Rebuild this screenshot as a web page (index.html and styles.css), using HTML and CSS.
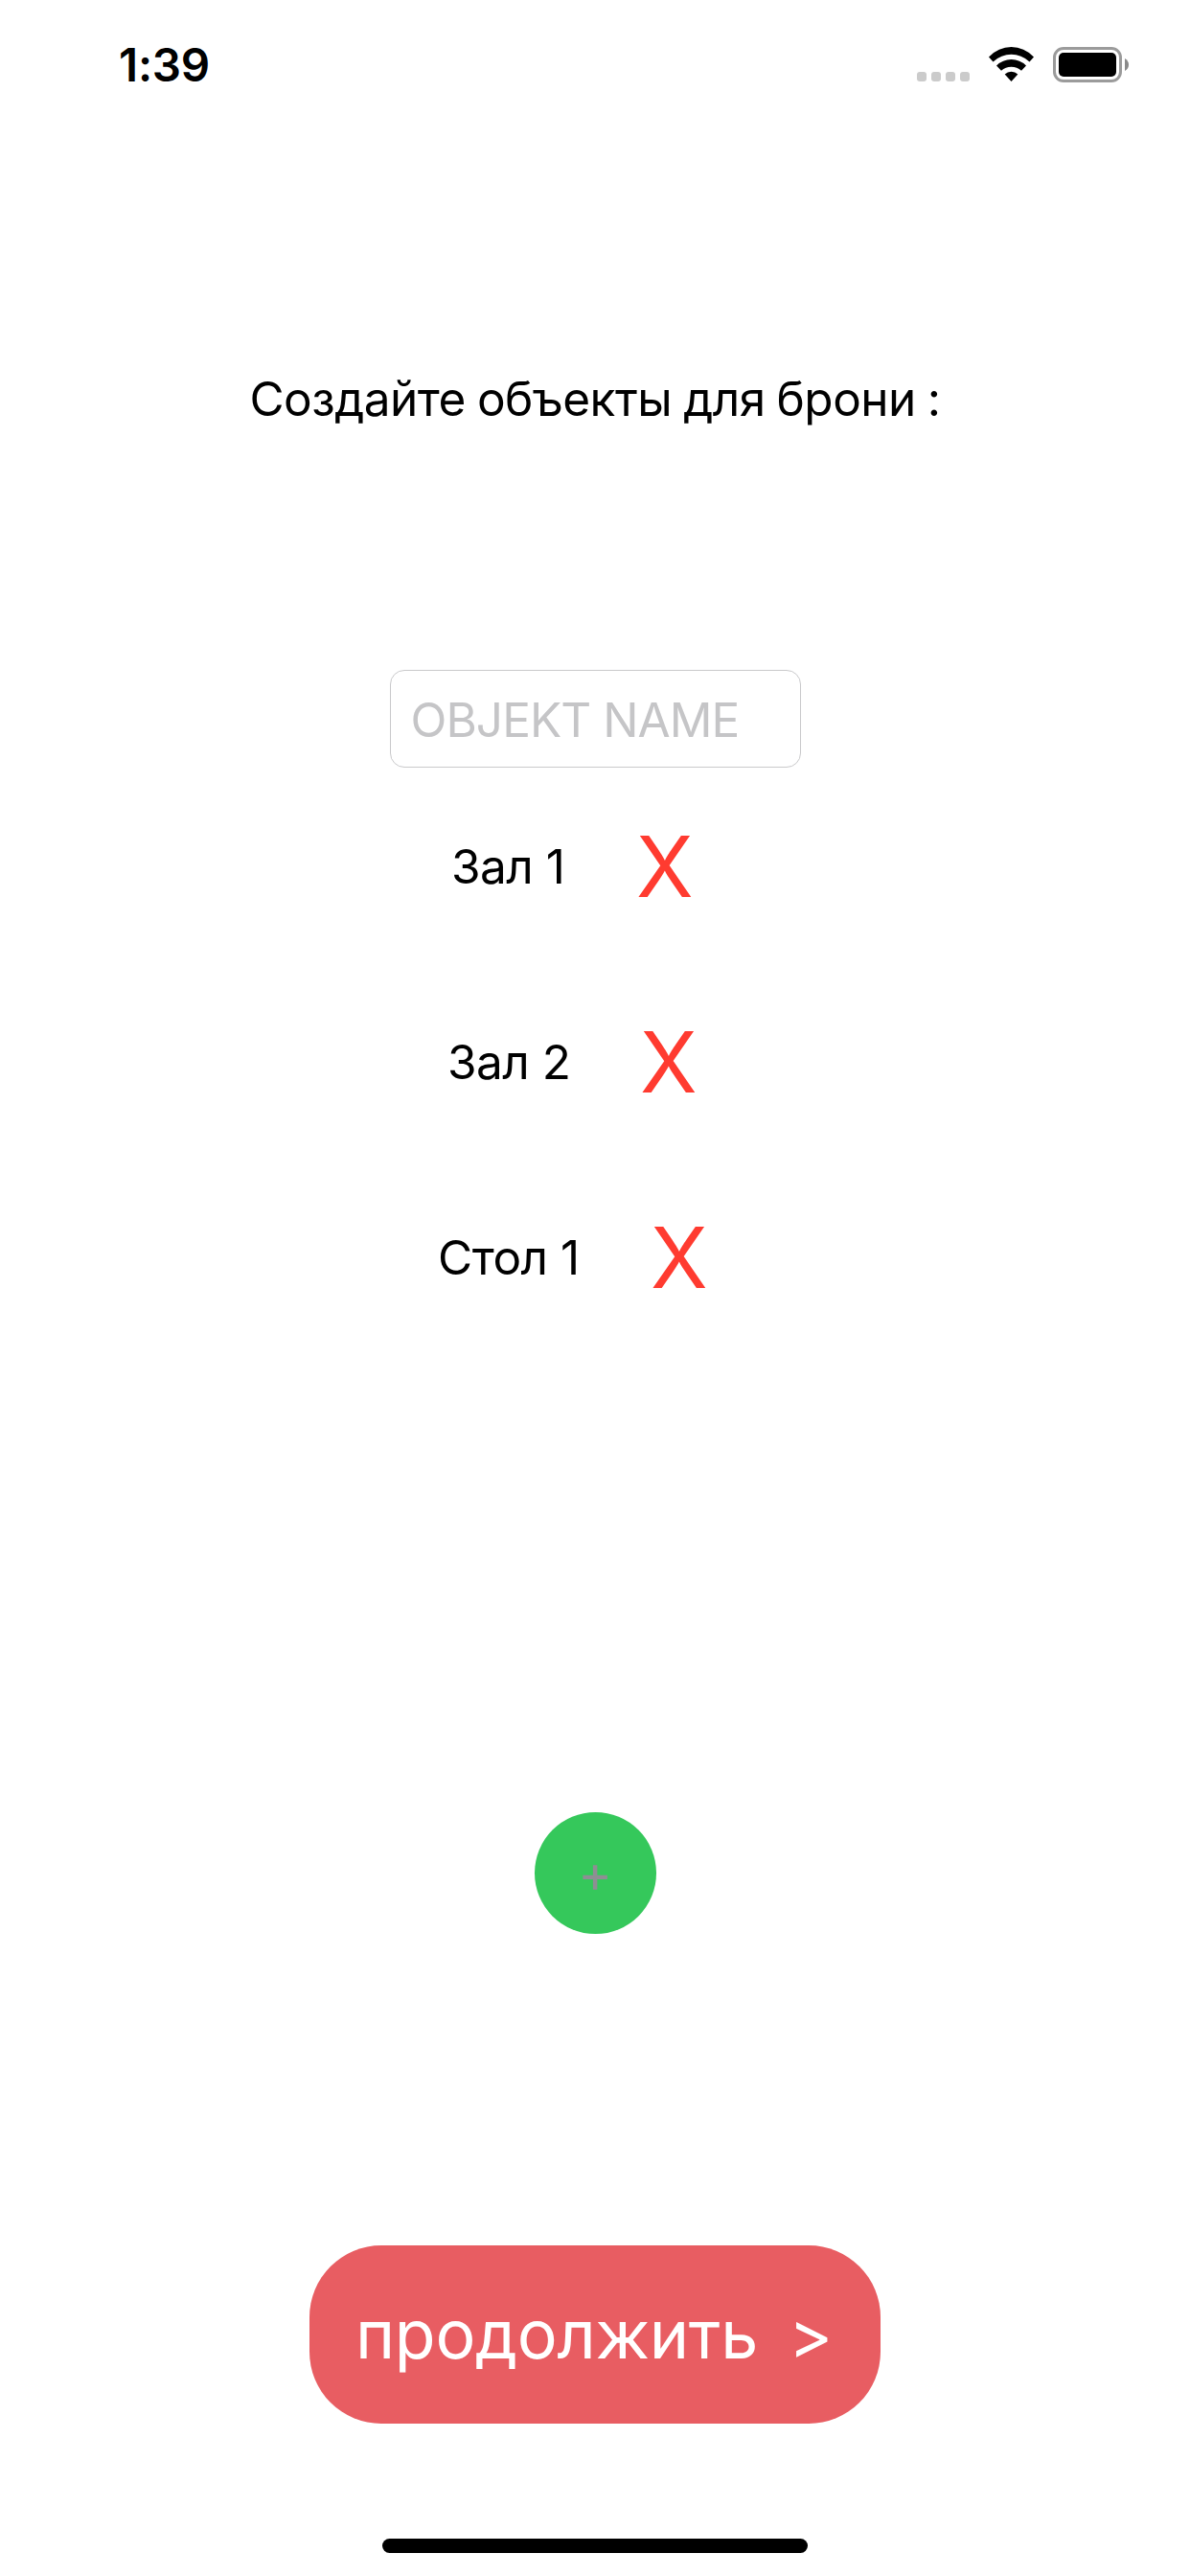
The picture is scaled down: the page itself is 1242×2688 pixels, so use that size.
FILE: index.html
```html
<!DOCTYPE html>
<html lang="ru">
<head>
<meta charset="utf-8">
<title>Объекты</title>
<link rel="stylesheet" href="styles.css">
</head>
<body>
<main class="screen">
  <header class="status">
    <span class="time">1:39</span>
    <svg class="indicators" width="224" height="40" viewBox="956 48 224 40">
      <g fill="#cbcbcb">
        <rect x="957" y="75" width="10" height="10" rx="3"/>
        <rect x="972" y="75" width="10" height="10" rx="3"/>
        <rect x="987" y="75" width="10" height="10" rx="3"/>
        <rect x="1002" y="75" width="10" height="10" rx="3"/>
      </g>
      <path d="M1032 59.5Q1042 49 1055.500 49T1079 59.500L1074.500 64.500Q1066 56.800 1055.500 56.800T1036.500 64.500Z"/>
      <path d="M1040 68.500Q1046.500 62 1055.500 62T1071 68.500L1066 73.700Q1061.500 69.800 1055.500 69.800T1045 73.700Z"/>
      <path d="M1048.700 77.500Q1051.500 74.700 1055.500 74.700T1062.300 77.500L1055.500 85Z"/>
      <rect x="1100.500" y="50.500" width="69" height="34" rx="9.500" fill="none" stroke="#9b9b9b" stroke-width="3"/>
      <rect x="1105" y="55" width="60" height="25" rx="5"/>
      <path d="M1174 61Q1178 63.500 1178 67.500T1174 74Z" fill="#8a8a8a"/>
    </svg>
  </header>
  <h1 class="title">Создайте объекты для брони :</h1>
  <div class="field">OBJEKT NAME</div>
  <ul class="list">
    <li class="row"><span class="name hall-one">Зал 1</span><span class="remove">X</span></li>
    <li class="row"><span class="name hall-two">Зал 2</span><span class="remove">X</span></li>
    <li class="row"><span class="name table-one">Стол 1</span><span class="remove">X</span></li>
  </ul>
  <div class="add"><span class="plus">+</span></div>
  <div class="next"><span class="next-label">продолжить</span><span class="chevron">&gt;</span></div>
  <div class="home"></div>
</main>
</body>
</html>
```
FILE: styles.css
```css
* { box-sizing: border-box; }
body { margin: 0; background: #fff; font-family: Inter, "Liberation Sans", sans-serif; color: #000; }
.screen { width: 1242px; height: 2688px; display: flex; flex-direction: column; align-items: center; overflow: hidden; white-space: nowrap; }
.status { width: 100%; height: 136px; padding: 0 62px 0 124px; display: flex; justify-content: space-between; align-items: center; }
.time { font-size: 47.5px; font-weight: 600; line-height: 60px; letter-spacing: -0.2px; }
.indicators { display: block; }
.title { margin: 250px 0 0; height: 60px; font-size: 49.5px; line-height: 60px; font-weight: 400; letter-spacing: -0.5px; word-spacing: -1.5px; }
.field { margin-top: 253px; width: 429px; height: 102px; padding: 1px 0 0 21px; border: 1px solid #c9c9cb; border-radius: 15px; font-size: 49.5px; line-height: 100px; letter-spacing: -0.95px; color: #c5c5c7; }
.list { list-style: none; margin: 1px 0 0; padding: 0; width: 100%; }
.row { height: 204px; display: flex; align-items: center; }
.name { font-size: 49.5px; line-height: 60px; letter-spacing: -0.5px; }
.hall-one { width: 664px; padding-left: 471px; }
.hall-two { width: 668px; padding-left: 467px; }
.table-one { width: 679px; padding-left: 457px; }
.remove { font-size: 87.5px; line-height: 106px; color: #ff3b30; }
.add { margin-top: 477px; width: 127px; height: 127px; border-radius: 50%; background: #35c85b; display: flex; justify-content: center; align-items: center; }
.plus { font-size: 54px; line-height: 64px; color: #8e8e93; }
.next { margin-top: 325px; width: 596px; height: 186px; border-radius: 75px; background: #e85d62; color: #fff; display: flex; align-items: center; padding-left: 48px; font-size: 70px; line-height: 84px; }
.next-label { width: 452px; letter-spacing: -0.3px; }
.home { margin-top: 120px; width: 444px; height: 15px; border-radius: 8px; background: #000; }
```
